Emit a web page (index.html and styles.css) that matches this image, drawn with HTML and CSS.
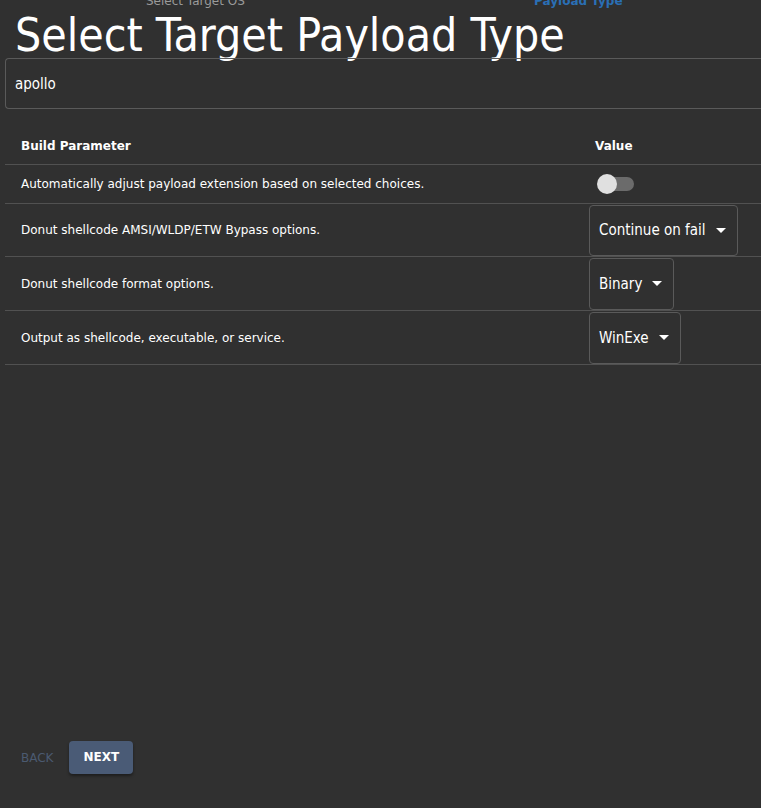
FILE: index.html
```html
<!DOCTYPE html>
<html>
<head>
<meta charset="utf-8">
<link rel="stylesheet" href="styles.css">
</head>
<body>
<div class="page">
  <div class="stepper">
    <div class="step">Select Target OS</div>
    <div class="step active">Payload Type</div>
  </div>
  <h1 class="title">Select Target Payload Type</h1>
  <div class="input"><span>apollo</span></div>
  <table class="params">
    <thead>
      <tr><th class="c1">Build Parameter</th><th class="c2">Value</th></tr>
    </thead>
    <tbody>
      <tr class="r1"><td class="c1">Automatically adjust payload extension based on selected choices.</td>
        <td class="c2"><span class="switch"><span class="track"></span><span class="thumb"></span></span></td></tr>
      <tr class="r2"><td class="c1">Donut shellcode AMSI/WLDP/ETW Bypass options.</td>
        <td class="c2"><div class="select">Continue on fail<span class="caret"></span></div></td></tr>
      <tr><td class="c1">Donut shellcode format options.</td>
        <td class="c2"><div class="select">Binary<span class="caret"></span></div></td></tr>
      <tr><td class="c1">Output as shellcode, executable, or service.</td>
        <td class="c2"><div class="select">WinExe<span class="caret"></span></div></td></tr>
    </tbody>
  </table>
  <div class="spacer"></div>
  <div class="actions">
    <span class="back">BACK</span>
    <span class="next">NEXT</span>
  </div>
</div>
</body>
</html>
```
FILE: styles.css
```css
html, body { margin: 0; padding: 0; background: #303030; }
body { width: 761px; height: 808px; overflow: hidden; font-family: "DejaVu Sans", Verdana, sans-serif; color: #fff; }
.page { display: flex; flex-direction: column; height: 808px; padding: 0 0 0 5px; box-sizing: border-box; }
.stepper { display: flex; height: 0; position: relative; }
.step { position: absolute; top: -6px; font-size: 12px; color: #9a9a9a; white-space: nowrap; }
.step:first-child { left: 141px; }
.step.active { left: 529px; color: #2a6fb5; font-weight: bold; }
.title { margin: 13px 0 0 10px; font-family: "DejaVu Sans Condensed", "DejaVu Sans", sans-serif; font-weight: normal; font-size: 46px; line-height: 45px; height: 45px; white-space: nowrap; }
.input { margin-top: 0; height: 51px; border: 1px solid #5a5a5a; border-right: none; border-radius: 4px 0 0 4px; box-sizing: border-box; display: flex; align-items: center; padding-left: 9px; font-size: 15px; font-family: "DejaVu Sans Condensed", "DejaVu Sans", sans-serif; }
.params { margin-top: 18px; width: 756px; border-collapse: collapse; font-size: 12px; }
.params th { text-align: left; font-weight: bold; height: 37px; padding: 0; border-bottom: 1px solid #515151; }
.params td { padding: 0; border-bottom: 1px solid #515151; height: 53px; }
.params .r1 td { height: 38px; }
.params .r2 td { height: 52px; }
.c1 { padding-left: 16px !important; }
.c2 { width: 166px; }
th.c2 { padding-left: 6px !important; }
.switch { position: relative; display: inline-block; width: 40px; height: 20px; margin-left: 8px; vertical-align: middle; }
.track { position: absolute; left: 3px; top: 3px; width: 34px; height: 14px; border-radius: 7px; background: #6b6b6b; }
.thumb { position: absolute; left: 0; top: 0; width: 20px; height: 20px; border-radius: 50%; background: #e0e0e0; }
.select { display: inline-flex; align-items: center; height: 52px; box-sizing: border-box; border: 1px solid #5a5a5a; border-radius: 4px; padding: 0 11px 0 9px; font-size: 15px; font-family: "DejaVu Sans Condensed", "DejaVu Sans", sans-serif; }
.r2 .select { height: 51px; }
.caret { width: 0; height: 0; border-left: 5px solid transparent; border-right: 5px solid transparent; border-top: 5px solid #fff; margin-left: 10px; }
.spacer { flex: 1; }
.actions { display: flex; align-items: center; gap: 16px; padding-left: 16px; margin-bottom: 34px; }
.back { font-size: 12px; color: #4b5a70; }
.next { background: #4a5b76; color: #fff; font-weight: bold; font-size: 12px; padding: 0 14px; height: 33px; line-height: 33px; border-radius: 4px; box-shadow: 0 2px 3px rgba(0,0,0,0.4); }
```
